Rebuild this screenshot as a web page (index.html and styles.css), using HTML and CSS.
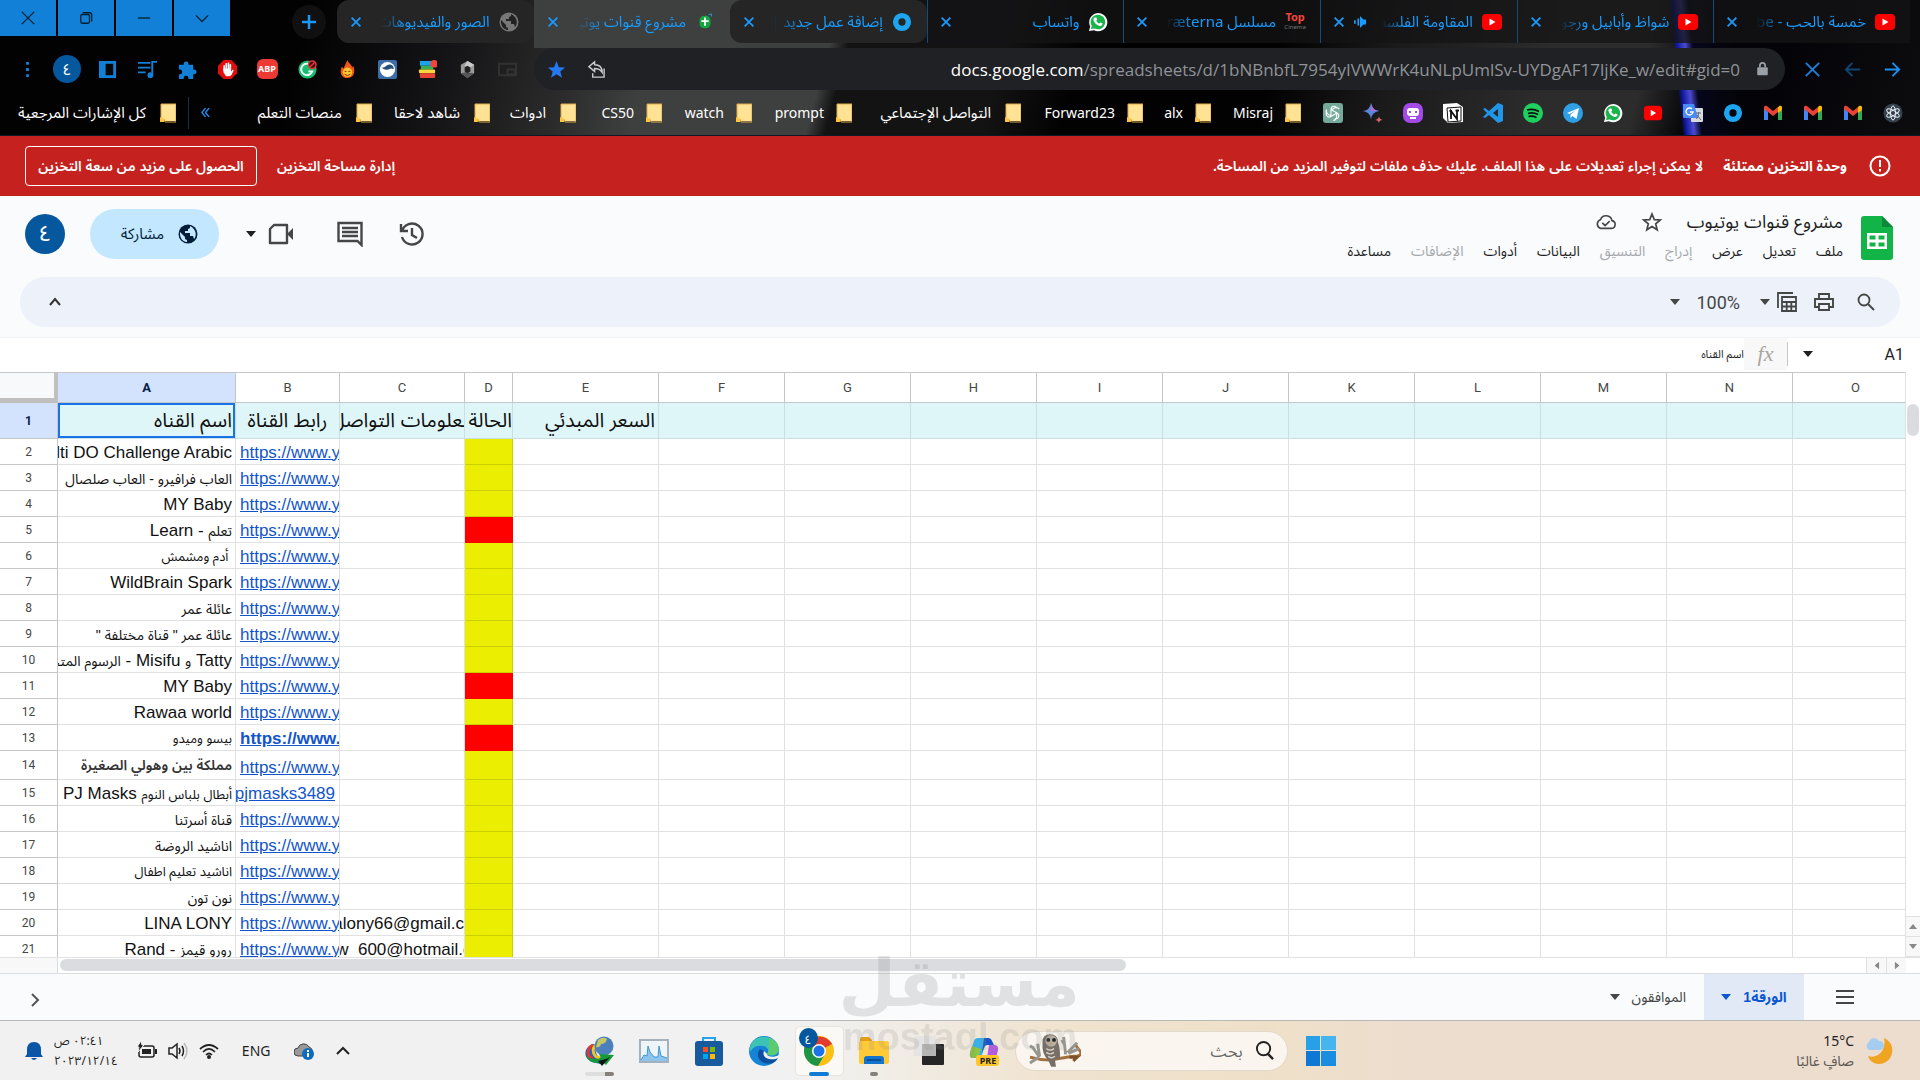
FILE: index.html
```html
<!DOCTYPE html>
<html lang="ar" dir="rtl">
<head>
<meta charset="utf-8">
<title>مشروع قنوات يوتيوب</title>
<link rel="stylesheet" href="styles.css">
</head>
<body>
<svg class="sprite" aria-hidden="true">
  <symbol id="x" viewBox="0 0 16 16"><path d="M3 3l10 10M13 3L3 13" fill="none" stroke="currentColor" stroke-width="2"/></symbol>
  <symbol id="caret" viewBox="0 0 10 6"><path d="M0 0h10L5 6z" fill="currentColor"/></symbol>
  <symbol id="yt" viewBox="0 0 22 16"><rect x="1" width="20" height="16" rx="4" fill="#f00"/><path d="M8.500 4.500v7l6-3.500z" fill="#fff"/></symbol>
  <symbol id="wa" viewBox="0 0 22 22"><path d="M1 21l1.500-5A10 10 0 1 1 6.500 20z" fill="#fff"/><path d="M3.200 18.800l1-3.400a8 8 0 1 1 3 2.700z" fill="#1bb34c"/><path d="M7.500 6l1.700 0 .9 2.300-1 1.200c.8 1.600 1.900 2.500 3.400 3.200l1.200-1.200 2.300 1.100c0 2-1.500 2.900-3 2.700-3.600-.6-6.800-4-7-7 0-1 .6-1.900 1.500-2.300z" fill="#fff"/></symbol>
  <symbol id="ring" viewBox="0 0 22 22"><circle cx="11" cy="11" r="7" fill="none" stroke="#1da5f0" stroke-width="6"/></symbol>
  <symbol id="folder" viewBox="0 0 16 20"><path d="M1 1h15v17H1z" fill="#ffe293"/><path d="M1 1h15v18H5l-1-3-2 1-1-3z" fill="none" stroke="#dfa94a"/><path d="M0 19v-5l4 2v3z" fill="#ffc43d"/></symbol>
  <symbol id="gmail" viewBox="0 0 20 16"><path d="M1 2v13h4V7z" fill="#4285f4"/><path d="M19 2v13h-4V7z" fill="#34a853"/><path d="M1 2c1-2 3-1 4 0l5 4 5-4v5l-5 4-5-4-4-3z" fill="#ea4335"/><path d="M15 2c1-1 3-2 4 0v3l-4 3z" fill="#fbbc04"/></symbol>
  <symbol id="globe" viewBox="0 0 20 20"><circle cx="10" cy="10" r="9.500" fill="currentColor"/><path d="M2 8l5 5v2l2 1v2C4 17.500 1.500 13 2 8zM12 2v2l-2 1v2H7v2h5v3h3l1 3c3-3 2.500-10-4-13z" fill="var(--hole)"/></symbol>
</svg>

<div class="browser">
  <div class="strip">
    <div class="tab"><svg class="fav"><use href="#yt"/></svg><span>خمسة بالحب - YouTube</span><button aria-label="إغلاق"><svg><use href="#x"/></svg></button></div>
    <div class="tab"><svg class="fav"><use href="#yt"/></svg><span>شواظ وأبابيل ورجوم</span><button aria-label="إغلاق"><svg><use href="#x"/></svg></button></div>
    <div class="tab"><svg class="fav"><use href="#yt"/></svg><span>المقاومة الفلسطينية</span><svg class="audio" viewBox="0 0 14 14"><path d="M14 4h-3L7 0v14l4-4h3zM4 3h2v8H4zM0 5h2v4H0z" fill="#189cff"/></svg><button aria-label="إغلاق"><svg><use href="#x"/></svg></button></div>
    <div class="tab"><span class="fav top"><b>Top</b><i>Cinema</i></span><span>مسلسل Barbaræterna</span><button aria-label="إغلاق"><svg><use href="#x"/></svg></button></div>
    <div class="tab"><svg class="fav"><use href="#wa"/></svg><span>واتساب</span><button aria-label="إغلاق"><svg><use href="#x"/></svg></button></div>
    <div class="tab lit"><svg class="fav"><use href="#ring"/></svg><span>إضافة عمل جديد | مستقل</span><button aria-label="إغلاق"><svg><use href="#x"/></svg></button></div>
    <div class="tab active"><svg class="fav" viewBox="0 0 22 22"><rect x="5" y="4" width="12" height="14" rx="5" fill="#12a542"/><path d="M11 6v9M7 10h8" stroke="#fff" stroke-width="2"/><path d="M15 3l3-1v3" stroke="#1da5f0" fill="none"/></svg><span>مشروع قنوات يوتيوب - جداول</span><button aria-label="إغلاق"><svg><use href="#x"/></svg></button></div>
    <div class="tab lit"><svg class="fav grey"><use href="#globe"/></svg><span>الصور والفيديوهات</span><button aria-label="إغلاق"><svg><use href="#x"/></svg></button></div>
    <button class="newtab" aria-label="علامة تبويب جديدة"><svg viewBox="0 0 16 16"><path d="M8 1v14M1 8h14" stroke="#1e96f5" stroke-width="2.500"/></svg></button>
    <div class="wincontrols">
      <button aria-label="بحث في علامات التبويب"><svg viewBox="0 0 16 16"><path d="M1 5l7 7 7-7"/></svg></button>
      <button aria-label="تصغير"><svg viewBox="0 0 16 16"><path d="M1 8h14"/></svg></button>
      <button aria-label="استعادة"><svg viewBox="0 0 16 16"><rect x="2" y="4" width="10" height="10" rx="2"/><path d="M4 2h8q2.500 0 2.500 2.500V12"/></svg></button>
      <button aria-label="إغلاق النافذة"><svg viewBox="0 0 16 16"><path d="M1 1l14 14M15 1L1 15"/></svg></button>
    </div>
  </div>

  <div class="navbar">
    <button class="nb" aria-label="رجوع"><svg viewBox="0 0 20 20"><path d="M2 10h15M10 3l7 7-7 7" fill="none" stroke="#1a90ef" stroke-width="2"/></svg></button>
    <button class="nb dim" aria-label="تقدم"><svg viewBox="0 0 20 20"><path d="M18 10H3M10 3l-7 7 7 7" fill="none" stroke="#1a90ef" stroke-width="2"/></svg></button>
    <button class="nb" aria-label="إيقاف"><svg viewBox="0 0 20 20"><path d="M3 3l14 14M17 3L3 17" fill="none" stroke="#1a80d8" stroke-width="2"/></svg></button>
    <div class="omni">
      <svg class="lock" viewBox="0 0 12 16"><path d="M3 6V4a3 3 0 0 1 6 0v2" fill="none" stroke="#9aa0a6" stroke-width="2"/><rect y="6" width="12" height="9" rx="1" fill="#9aa0a6"/></svg>
      <span class="url" dir="ltr"><b>docs.google.com</b>/spreadsheets/d/1bNBnbfL7954yIVWWrK4uNLpUmlSv-UYDgAF17ljKe_w/edit#gid=0</span>
      <button class="nb" aria-label="مشاركة"><svg viewBox="0 0 20 20"><path d="M8 2L2 7l6 5V9c4 0 6 1 8 4 0-5-3-8-8-8zM6 14v4h12V9" fill="none" stroke="#c7cacd" stroke-width="1.500"/></svg></button>
      <button class="nb" aria-label="إشارة مرجعية"><svg viewBox="0 0 20 20"><path d="M10 1l2.500 6.500 6.500.300-5 4.200 1.800 6.600L10 15l-5.800 3.600L6 12 1 7.800l6.500-.300z" fill="#2478f0"/></svg></button>
    </div>
    <button class="nb faint" aria-label="صورة داخل صورة"><svg viewBox="0 0 20 20"><path d="M1 4h18v12H1zM10 10h8v5h-8z" fill="none" stroke="#444" stroke-width="2"/></svg></button>
    <button class="nb" aria-label="إضافة"><svg viewBox="0 0 20 20"><path d="M10 1l7 4v9l-7 5-7-5V5z" fill="#9a9a9a"/><path d="M10 1l7 4-4 3-6-2z" fill="#c9c9c9"/><path d="M3 14l5-1 9 1-7 5z" fill="#555"/><path d="M10 6l3 2v4l-3 2-3-2V8z" fill="#222"/></svg></button>
    <button class="nb" aria-label="إضافة"><svg viewBox="0 0 20 20"><rect x="2" y="1" width="13" height="5" fill="#1ea0ea"/><rect x="3" y="6" width="13" height="4" fill="#35b057"/><rect x="1" y="10" width="17" height="4" rx="1" fill="#ffd53d"/><rect x="2" y="14" width="16" height="5" rx="1" fill="#ea4335"/><circle cx="17" cy="4" r="4" fill="#f2453c"/></svg></button>
    <button class="nb" aria-label="إضافة"><svg viewBox="0 0 20 20"><rect width="20" height="20" rx="2" fill="#3b6ea8"/><circle cx="10" cy="10" r="8" fill="#fff"/><path d="M3.500 8c5 1 6-6 12-2q1.500 2 1 4c-4-4-6 4-13-2z" fill="#264f7e"/></svg></button>
    <button class="nb" aria-label="إضافة"><svg viewBox="0 0 20 20"><path d="M10 0c1 4 4 4 5 8l1-2c3 7 0 13-6 13S1 14 4 7l2 2c1-3 2-5 4-9z" fill="#f2541b"/><circle cx="10" cy="13" r="5" fill="#ffc52e"/><path d="M7 12h2M11 12h2M7 15q3 3 6 0" stroke="#7a2600" fill="none"/></svg></button>
    <button class="nb" aria-label="إضافة"><svg viewBox="0 0 20 20"><circle cx="10" cy="10" r="9.500" fill="#18bd74"/><path d="M14 6a6 6 0 1 0 1 6h-4" stroke="#fff" stroke-width="2" fill="none"/><circle cx="15" cy="5" r="4" fill="#3a1112" stroke="#e33" stroke-width="1.500"/><path d="M12 8l6-6" stroke="#e33" stroke-width="1.500"/></svg></button>
    <button class="nb" aria-label="ABP"><span class="abp">ABP</span></button>
    <button class="nb" aria-label="إضافة"><svg viewBox="0 0 20 20"><path d="M6 0h8l6 6v8l-6 6H6l-6-6V6z" fill="#e40d0d"/><path d="M6.500 11V6M8.700 9V4M11 9V3.500M13 10V5" stroke="#fff" stroke-width="1.700" stroke-linecap="round"/><path d="M5.700 9h8v3l2-2 .800 1-2.500 5-2 1H8.500l-2.800-4z" fill="#fff"/></svg></button>
    <button class="nb" aria-label="الإضافات"><svg viewBox="0 0 20 20"><path d="M1 5h5V4a2.500 2.500 0 0 1 5 0v1h5v5h1a2.500 2.500 0 0 1 0 5h-1v5h-5v-1a2.500 2.500 0 0 0-5 0v1H1v-5h1a2.500 2.500 0 0 0 0-5H1z" fill="#1180d6"/></svg></button>
    <button class="nb" aria-label="الوسائط"><svg viewBox="0 0 20 20"><path d="M0 3h13M0 8h13M0 13h8M15 16V2h5" stroke="#1180d6" stroke-width="2" fill="none"/><circle cx="13" cy="16" r="3" fill="#1180d6"/></svg></button>
    <button class="nb" aria-label="اللوحة الجانبية"><svg viewBox="0 0 20 20"><rect x="1" y="1" width="18" height="18" fill="#1180d6"/><rect x="8" y="4" width="8" height="12" fill="#08080a"/></svg></button>
    <button class="nb" aria-label="الملف الشخصي"><span class="me small">٤</span></button>
    <button class="nb" aria-label="المزيد"><svg viewBox="0 0 20 20"><path d="M8.500 2h3v3h-3zM8.500 8.500h3v3h-3zM8.500 15h3v3h-3z" fill="#1180d6"/></svg></button>
  </div>

  <nav class="bookmarks">
    <a href="#" aria-label="React"><svg viewBox="0 0 20 20"><circle cx="10" cy="10" r="9.500" fill="#35424e"/><g fill="none" stroke="#e6edf2"><ellipse cx="10" cy="10" rx="2.500" ry="7"/><ellipse cx="10" cy="10" rx="2.500" ry="7" transform="rotate(60 10 10)"/><ellipse cx="10" cy="10" rx="2.500" ry="7" transform="rotate(120 10 10)"/></g></svg></a>
    <a href="#" aria-label="Gmail"><svg><use href="#gmail"/></svg></a>
    <a href="#" aria-label="Gmail"><svg><use href="#gmail"/></svg></a>
    <a href="#" aria-label="Gmail"><svg><use href="#gmail"/></svg></a>
    <a href="#" aria-label="مستقل"><svg><use href="#ring"/></svg></a>
    <a href="#" aria-label="ترجمة"><svg viewBox="0 0 20 20"><rect x="8" y="5" width="12" height="14" rx="1" fill="#d8dadd"/><path d="M0 1h11l4 14H1q-1 0-1-1z" fill="#4a8cf5"/><path d="M9 6a3.500 3.500 0 1 0 1 3H7" fill="none" stroke="#fff" stroke-width="1.300"/><path d="M13 10h5M15.500 9v1q0 4-2 6M14 12l4 5" stroke="#667" fill="none"/></svg></a>
    <a href="#" aria-label="YouTube"><svg><use href="#yt"/></svg></a>
    <a href="#" aria-label="WhatsApp"><svg><use href="#wa"/></svg></a>
    <a href="#" aria-label="Telegram"><svg viewBox="0 0 20 20"><circle cx="10" cy="10" r="10" fill="#2f9fe6"/><path d="M4 10l12-5-2.500 11-4-3-2 2v-3.500l5-4-6 3.500z" fill="#fff"/></svg></a>
    <a href="#" aria-label="Spotify"><svg viewBox="0 0 20 20"><circle cx="10" cy="10" r="10" fill="#1ed15e"/><path d="M4 7q6-2 12 1.500M5 10.500q5-1.500 10 1M5.500 13.500q4-1 8 1" stroke="#111" stroke-width="1.700" fill="none"/></svg></a>
    <a href="#" aria-label="VS Code"><svg viewBox="0 0 20 20"><path d="M15 0l5 2v16l-5 2-9-8-4 3-2-1 4-4-4-4 2-1 4 3zM15 6l-5 4 5 4z" fill="#2196e8" fill-rule="evenodd"/></svg></a>
    <a href="#" aria-label="Notion"><svg viewBox="0 0 20 20"><path d="M0 1l14-1 6 4v15l-15 1-5-5z" fill="#fff"/><path d="M4 5l14-1v14L5 19z" fill="#fff" stroke="#111"/><path d="M8 16V8l6 8V7M6.500 8H9M12.500 7.500H16" stroke="#111" stroke-width="1.800" fill="none"/></svg></a>
    <a href="#" aria-label="Poe"><svg viewBox="0 0 20 20"><rect width="20" height="20" rx="7" fill="#a34ae8"/><rect x="4" y="5" width="12" height="8" rx="3" fill="#fff"/><path d="M7 8v2M13 8v2" stroke="#a34ae8" stroke-width="2"/><path d="M7 15h6" stroke="#fff" stroke-width="2"/></svg></a>
    <a href="#" aria-label="Bard"><svg viewBox="0 0 20 20"><path d="M8 0q1 7 8 8-7 1-8 8-1-7-8-8 7-1 8-8z" fill="#5a85dd"/><path d="M8 0q1 7 8 8H8z" fill="#b36bd0"/><path d="M16 13q0 3 4 4-4 0-4 3-1-3-4-3 4-1 4-4z" fill="#d96570"/></svg></a>
    <a href="#" aria-label="ChatGPT"><svg viewBox="0 0 20 20"><rect width="20" height="20" rx="3" fill="#74a99b"/><g fill="none" stroke="#fff" stroke-width="1.100"><path d="M8 12.500V6.500q0-3 2.800-3.300 2.700 0 3.400 2.300M8 7l4-2.200q3-1 4.200 1.500"/><path d="M8 12.500V6.500q0-3 2.800-3.300 2.700 0 3.400 2.300M8 7l4-2.200q3-1 4.200 1.500" transform="rotate(120 10 10)"/><path d="M8 12.500V6.500q0-3 2.800-3.300 2.700 0 3.400 2.300M8 7l4-2.200q3-1 4.200 1.500" transform="rotate(240 10 10)"/></g></svg></a>
    <a href="#" class="f w90"><svg><use href="#folder"/></svg><span>Misraj</span></a>
    <a href="#" class="f w68"><svg><use href="#folder"/></svg><span>alx</span></a>
    <a href="#" class="f w122"><svg><use href="#folder"/></svg><span>Forward23</span></a>
    <a href="#" class="f ara w169"><svg><use href="#folder"/></svg><span>التواصل الإجتماعي</span></a>
    <a href="#" class="f w100"><svg><use href="#folder"/></svg><span>prompt</span></a>
    <a href="#" class="f w90"><svg><use href="#folder"/></svg><span>watch</span></a>
    <a href="#" class="f w86"><svg><use href="#folder"/></svg><span>CS50</span></a>
    <a href="#" class="f ara w86"><svg><use href="#folder"/></svg><span>ادوات</span></a>
    <a href="#" class="f ara w118"><svg><use href="#folder"/></svg><span>شاهد لاحقا</span></a>
    <a href="#" class="f ara"><svg><use href="#folder"/></svg><span>منصات التعلم</span></a>
    <span class="all"><button class="more" aria-label="المزيد من الإشارات"><svg viewBox="0 0 10 10"><path d="M5 0L1 5l4 5M9 0L5 5l4 5" fill="none" stroke="#1a90ef" stroke-width="1.500"/></svg></button><a href="#" class="f ara"><svg><use href="#folder"/></svg><span>كل الإشارات المرجعية</span></a></span>
  </nav>
</div>

<div class="banner">
  <svg viewBox="0 0 22 22"><circle cx="11" cy="11" r="9.500" fill="none" stroke="#fff" stroke-width="2"/><path d="M11 5v7M11 14v2.500" stroke="#fff" stroke-width="2"/></svg>
  <strong>وحدة التخزين ممتلئة</strong>
  <span>لا يمكن إجراء تعديلات على هذا الملف. عليك حذف ملفات لتوفير المزيد من المساحة.</span>
  <a href="#">إدارة مساحة التخزين</a>
  <button>الحصول على مزيد من سعة التخزين</button>
</div>

<header class="head">
  <svg class="logo" viewBox="0 0 32 44"><path d="M3 0h18l11 11v30q0 3-3 3H3q-3 0-3-3V3q0-3 3-3z" fill="#12b347"/><path d="M21 0l11 11H21z" fill="#0b8a3c"/><path d="M6 17h20v16H6zM8.500 19.500v4h6v-4zM17.500 19.500v4h6v-4zM8.500 26.500v4h6v-4zM17.500 26.500v4h6v-4z" fill="#fff" fill-rule="evenodd"/></svg>
  <div class="titles">
    <div class="name"><h1>مشروع قنوات يوتيوب</h1>
      <button aria-label="تمييز بنجمة"><svg viewBox="0 0 20 20"><path d="M10 2l2.300 5.600 6 .400-4.600 3.900 1.500 5.900-5.200-3.300-5.200 3.300 1.500-5.900L1.700 8l6-.400z" fill="none" stroke="#444746" stroke-width="1.700"/></svg></button>
      <button aria-label="حالة المستند"><svg viewBox="0 0 24 18"><path d="M6 16a5 5 0 0 1 0-9.500A6.500 6.500 0 0 1 18.500 7.500 4.300 4.300 0 0 1 18 16zM8 10l3 3 5-5" fill="none" stroke="#444746" stroke-width="1.800"/></svg></button>
    </div>
    <nav class="menu"><button>ملف</button><button>تعديل</button><button>عرض</button><button disabled>إدراج</button><button disabled>التنسيق</button><button>البيانات</button><button>أدوات</button><button disabled>الإضافات</button><button>مساعدة</button></nav>
  </div>
  <div class="actions">
    <button aria-label="السجل"><svg viewBox="0 0 26 26"><path d="M3 10A10.500 10.500 0 1 1 3 16M2 3v7h7M13 7v7l5 3" fill="none" stroke="#444746" stroke-width="2.400"/></svg></button>
    <button aria-label="التعليقات"><svg viewBox="0 0 26 26"><path d="M1.500 2h23v22l-4-4h-19zM5 7h16M5 11h16M5 15h16" fill="none" stroke="#444746" stroke-width="2.400"/></svg></button>
    <button class="meet" aria-label="مكالمة"><svg viewBox="0 0 26 26"><path d="M6 4h13v18H2V8z" fill="none" stroke="#444746" stroke-width="2.400" stroke-linejoin="round"/><path d="M20 12l5-5v12l-5-5z" fill="#444746"/></svg><svg class="caret"><use href="#caret"/></svg></button>
    <button class="share"><svg><use href="#globe"/></svg><span>مشاركة</span></button>
    <button aria-label="الحساب"><span class="me">٤</span></button>
  </div>
</header>

<div class="tools">
  <button aria-label="بحث"><svg viewBox="0 0 20 20"><circle cx="8" cy="8" r="5.500" fill="none" stroke="#444746" stroke-width="1.800"/><path d="M12 12l6 6" stroke="#444746" stroke-width="2"/></svg></button>
  <button aria-label="طباعة"><svg viewBox="0 0 20 20"><path d="M5 7V2h10v5M5 15H1V7h18v8h-4M5 12h10v6H5z" fill="none" stroke="#444746" stroke-width="1.900"/></svg></button>
  <button class="calc" aria-label="عرض الفلاتر"><svg viewBox="0 0 22 22"><path d="M2 17V2h15M6 6h14v14H6zM6 11h14M6 15.500h14M10.700 11v9M15.300 11v9" fill="none" stroke="#444746" stroke-width="1.800"/></svg><svg class="caret"><use href="#caret"/></svg></button>
  <button class="zoom"><span dir="ltr">100%</span><svg class="caret"><use href="#caret"/></svg></button>
  <button class="fold" aria-label="إخفاء القوائم"><svg viewBox="0 0 14 14"><path d="M2 10l5-6 5 6" fill="none" stroke="#333" stroke-width="2"/></svg></button>
</div>

<div class="formula">
  <button class="cellname"><span>A1</span><svg class="caret"><use href="#caret"/></svg></button>
  <span class="fx">fx</span>
  <input aria-label="شريط الصيغة" value="اسم القناه">
</div>

<main class="sheet" dir="ltr">
  <div class="grid">
  <table>
    <colgroup><col class="cn"><col class="ca"><col class="cb"><col class="cc"><col class="cd"><col class="ce"><col class="cf" span="10"></colgroup>
    <thead><tr><th class="corner"><th class="sel">A<th>B<th>C<th>D<th>E<th>F<th>G<th>H<th>I<th>J<th>K<th>L<th>M<th>N<th>O</tr></thead>
    <tbody>
    <tr class="first"><th class="sel">1<td class="pick"><div dir="rtl">اسم القناه</div><td><div class="mid" dir="rtl">رابط القناة</div><td><div class="mid" dir="rtl"><span>معلومات التواصل</span></div><td><div class="flush" dir="rtl">الحالة</div><td><div dir="rtl">السعر المبدئي</div><td><td><td><td><td> <td><td><td><td><td></tr>
    <tr><th>2<td><div dir="rtl">Multi DO Challenge Arabic</div><td><a href="#">https://www.youtube.com/</a><td><td class="y"><td> <td><td><td><td><td> <td><td><td><td><td></tr>
    <tr><th>3<td><div dir="rtl" class="ar">العاب فرافيرو - العاب صلصال</div><td><a href="#">https://www.youtube.com/</a><td><td class="y"><td> <td><td><td><td><td> <td><td><td><td><td></tr>
    <tr><th>4<td><div dir="rtl">MY Baby</div><td><a href="#">https://www.youtube.com/</a><td><td class="y"><td> <td><td><td><td><td> <td><td><td><td><td></tr>
    <tr><th>5<td><div dir="rtl"><span class="ar">تعلم</span> - Learn</div><td><a href="#">https://www.youtube.com/</a><td><td class="r"><td> <td><td><td><td><td> <td><td><td><td><td></tr>
    <tr><th>6<td><div dir="rtl" class="ar sm">&nbsp;أدم ومشمش</div><td><a href="#">https://www.youtube.com/</a><td><td class="y"><td> <td><td><td><td><td> <td><td><td><td><td></tr>
    <tr><th>7<td><div dir="rtl">WildBrain Spark</div><td><a href="#">https://www.youtube.com/</a><td><td class="y"><td> <td><td><td><td><td> <td><td><td><td><td></tr>
    <tr><th>8<td><div dir="rtl" class="ar">عائلة عمر</div><td><a href="#">https://www.youtube.com/</a><td><td class="y"><td> <td><td><td><td><td> <td><td><td><td><td></tr>
    <tr><th>9<td><div dir="rtl" class="ar">عائلة عمر " قناة مختلفة "</div><td><a href="#">https://www.youtube.com/</a><td><td class="y"><td> <td><td><td><td><td> <td><td><td><td><td></tr>
    <tr><th>10<td><div dir="rtl">Tatty <span class="ar">و</span> Misifu - <span class="ar">الرسوم المتحركة</span></div><td><a href="#">https://www.youtube.com/</a><td><td class="y"><td> <td><td><td><td><td> <td><td><td><td><td></tr>
    <tr><th>11<td><div dir="rtl">MY Baby</div><td><a href="#">https://www.youtube.com/</a><td><td class="r"><td> <td><td><td><td><td> <td><td><td><td><td></tr>
    <tr><th>12<td><div dir="rtl">Rawaa world</div><td><a href="#">https://www.youtube.com/</a><td><td class="y"><td> <td><td><td><td><td> <td><td><td><td><td></tr>
    <tr><th>13<td><div dir="rtl" class="ar sm">بيسو وميدو</div><td><a href="#" class="bold">https://www.youtube.com/</a><td><td class="r"><td> <td><td><td><td><td> <td><td><td><td><td></tr>
    <tr class="tall"><th>14<td><div dir="rtl" class="ar semi">مملكة بين وهولي الصغيرة</div><td><a href="#">https://www.youtube.com/</a><td><td class="y"><td> <td><td><td><td><td> <td><td><td><td><td></tr>
    <tr><th>15<td><div dir="rtl"><span class="ar sm">أبطال بلباس النوم</span> PJ Masks</div><td><a href="#" class="end">youtube.com/@pjmasks3489</a><td><td class="y"><td> <td><td><td><td><td> <td><td><td><td><td></tr>
    <tr><th>16<td><div dir="rtl" class="ar">قناة أسرتنا</div><td><a href="#">https://www.youtube.com/</a><td><td class="y"><td> <td><td><td><td><td> <td><td><td><td><td></tr>
    <tr><th>17<td><div dir="rtl" class="ar">اناشيد الروضة</div><td><a href="#">https://www.youtube.com/</a><td><td class="y"><td> <td><td><td><td><td> <td><td><td><td><td></tr>
    <tr><th>18<td><div dir="rtl" class="ar sm">اناشيد تعليم اطفال</div><td><a href="#">https://www.youtube.com/</a><td><td class="y"><td> <td><td><td><td><td> <td><td><td><td><td></tr>
    <tr><th>19<td><div dir="rtl" class="ar">نون تون</div><td><a href="#">https://www.youtube.com/</a><td><td class="y"><td> <td><td><td><td><td> <td><td><td><td><td></tr>
    <tr><th>20<td><div dir="rtl">LINA LONY</div><td><a href="#">https://www.youtube.com/</a><td><div class="mid"><span>linalony66@gmail.com</span></div><td class="y"><td> <td><td><td><td><td> <td><td><td><td><td></tr>
    <tr><th>21<td><div dir="rtl"><span class="ar">رورو قيمز</span> - Rand</div><td><a href="#">https://www.youtube.com/</a><td><div class="mid"><span>raww_600@hotmail.com</span></div><td class="y"><td> <td><td><td><td><td> <td><td><td><td><td></tr>
    </tbody>
  </table>
  </div>
  <div class="vbar"><div class="vthumb"></div><div class="vbtns"><button aria-label="أعلى"><svg class="up"><use href="#caret"/></svg></button><button aria-label="أسفل"><svg><use href="#caret"/></svg></button></div></div>
  <div class="hbar"><div class="htrack"><div class="hthumb"></div></div><button aria-label="يسار"><svg class="lt"><use href="#caret"/></svg></button><button aria-label="يمين"><svg class="rt"><use href="#caret"/></svg></button></div>
</main>

<div class="tabsbar">
  <button class="ham" aria-label="كل الأوراق"><svg viewBox="0 0 18 14"><path d="M0 1h18M0 7h18M0 13h18" stroke="#444746" stroke-width="2"/></svg></button>
  <button class="st on"><span>الورقة1</span><svg class="caret"><use href="#caret"/></svg></button>
  <button class="st"><span>الموافقون</span><svg class="caret"><use href="#caret"/></svg></button>
  <button class="next" aria-label="إظهار اللوحة"><svg viewBox="0 0 10 14"><path d="M2 1l6 6-6 6" fill="none" stroke="#555" stroke-width="2"/></svg></button>
  <div class="mark" aria-hidden="true"><b>مستقل</b><i>mostaql.com</i></div>
</div>

<footer class="taskbar">
  <div class="weather">
    <svg viewBox="0 0 30 30"><path d="M20 2c14 6 9 26-5 26-6 0-10-4-11-8 8 3 19-4 16-18z" fill="#f0a423"/><path d="M5 14a4.500 4.500 0 0 1 0-8A5.500 5.500 0 0 1 15 5a4.500 4.500 0 0 1 1 9z" fill="#a5cdf2"/></svg>
    <div><div dir="ltr">15°C</div><div class="sub">صافٍ غالبًا</div></div>
  </div>
  <div class="apps">
    <button class="win" aria-label="ابدأ"><svg viewBox="0 0 30 30"><path d="M0 0h14v14H0z" fill="#27a0e8"/><path d="M15 0h15v14H15z" fill="#46b5ef"/><path d="M0 15h14v15H0z" fill="#0f78d4"/><path d="M15 15h15v15H15z" fill="#1a8de0"/></svg></button>
    <label class="search"><svg viewBox="0 0 20 20"><circle cx="9" cy="8" r="7" fill="none" stroke="#222" stroke-width="2"/><path d="M13 13l6 6" stroke="#222" stroke-width="2.500"/></svg><input placeholder="بحث" aria-label="بحث">
      <svg class="owl" viewBox="0 0 54 36"><path d="M1 25q10 3 21 3 16-3 25-4 7 0 7-4l-6-8" stroke="#a1703c" stroke-width="3" fill="none"/><path d="M42 25l8 0-4 4" stroke="#7d5226" stroke-width="3" fill="none"/><path d="M11 25L4 15l-3-2M10 25L1 31M11 24L9 11M38 22L36 4M40 20L50 10M41 21l11-5M37 12l-3-5" stroke="#96968f" stroke-width="3" fill="none"/><path d="M14 9q0-8 8-8t8 8q3 9 2 17l-5 2 1 7h-5l-3-7q-7-6-6-19z" fill="#776f66"/><circle cx="23" cy="8" r="6" fill="#b8b0a5"/><circle cx="20" cy="7" r="2" fill="#222"/><circle cx="26" cy="7" r="2" fill="#222"/><path d="M22 9h2l-1 3z" fill="#e0a040"/><path d="M18 16q4 3 8 0M18 20q4 3 8 0M20 24q3 3 7 0" stroke="#d9d2c8" stroke-width="1.500" fill="none"/></svg></label>
    <button aria-label="Copilot"><svg viewBox="0 0 30 30"><path d="M9 2h9l-5 17q-1 3-4 3H4Q0 22 1 17L5 5q1-3 4-3z" fill="#37b1e8"/><path d="M3 10l9 3-3 9H4Q0 22 1 17z" fill="#8cc540"/><path d="M15 2h4q3 0 4 3l2 4h-7q-2 0-3 3l-2 5z" fill="#1757c8"/><path d="M20 9h6q4 1 3 5l-2 8h-9z" fill="#b45be0"/><rect x="7" y="19" width="23" height="11" rx="3" fill="#ffc629"/></svg><span class="pre">PRE</span></button>
    <button aria-label="تطبيق"><svg viewBox="0 0 30 30"><rect x="8" y="8" width="22" height="21" rx="1" fill="#262626"/><rect width="22" height="20" fill="#e4e4e4"/><path d="M8 8h14v12H8z" fill="#b5b5b5"/></svg></button>
    <button class="run" aria-label="الملفات"><svg viewBox="0 0 30 30"><path d="M1 3q0-2 2-2h7l3 3v4H1z" fill="#e59f13"/><rect y="5" width="30" height="23" rx="2" fill="#ffca37"/><path d="M5 28v-5q0-3 3-3h14q3 0 3 3v5z" fill="#1474cc"/><path d="M8 24h14" stroke="#0b4f98" stroke-width="2"/></svg></button>
    <button class="cur" aria-label="Chrome"><svg viewBox="0 0 30 30"><circle cx="15" cy="15" r="15" fill="#fbbf16"/><path d="M15 15L2 8A15 15 0 0 1 28 8z" fill="#e33b2e"/><path d="M15 15L2 7.500A15 15 0 0 0 14 30l7-12z" fill="#1e9447"/><circle cx="15" cy="15" r="7" fill="#fff"/><circle cx="15" cy="15" r="5.500" fill="#1b73e8"/></svg><span class="me tiny">٤</span></button>
    <button aria-label="Edge"><svg viewBox="0 0 30 30"><circle cx="15" cy="15" r="15" fill="#1583d8"/><path d="M1 11C4-3 28-3 30 13c0 7-9 8-12 5 3-4 0-8-5-8-5-1-9 1-12 6z" fill="#3cc3b5"/><path d="M20 2c8 2 11 9 9 14-3 4-8 4-11 2 3-4 2-8 2-16z" fill="#5acb6f"/><path d="M11 13c-6 8 2 17 13 14 2-1 4-3 5-5-5 3-17 1-14-7z" fill="#0c4f9e"/><path d="M15 15c-3 8 9 10 14 7l1-3c-5 3-12 2-12-1z" fill="#f2f1f0"/></svg></button>
    <button aria-label="المتجر"><svg viewBox="0 0 30 30"><path d="M9 6V2h12v4" fill="none" stroke="#26a3ee" stroke-width="2"/><rect x="1" y="5" width="28" height="25" rx="3" fill="#175a9e"/><path d="M9 11h5v5H9z" fill="#f25022"/><path d="M16 11h5v5h-5z" fill="#7fba00"/><path d="M9 18h5v5H9z" fill="#00a4ef"/><path d="M16 18h5v5h-5z" fill="#ffb900"/></svg></button>
    <button aria-label="الأداء"><svg viewBox="0 0 30 24"><rect x="1" y="1" width="28" height="22" fill="#eef4f8" stroke="#a4b2bd" stroke-width="2"/><path d="M2 21l3-5 3 1 1-10 2 6 4 5h4l1-11 2 10 6 2v3H2z" fill="#8cc4ee"/><path d="M2 21l3-5 3 1 1-10 2 6 4 5h4l1-11 2 10 6 2" fill="none" stroke="#3c98dd"/></svg></button>
    <button class="many" aria-label="IDM"><svg viewBox="0 0 30 30"><path d="M10 8C0 10-2 22 8 26l8 2 10-7c-12 3-16-2-14-13z" fill="#1c64c8"/><path d="M9 9C3 12 2 20 9 23" stroke="#e8352a" stroke-width="3" fill="none"/><path d="M12 9c-5 4-3 12 4 13" stroke="#f6c31c" stroke-width="3" fill="none"/><circle cx="20" cy="10" r="9.500" fill="#4c80bd"/><path d="M14 4q5-4 9-1-1 5-6 5-1 4-5 3z" fill="#c6c862"/><path d="M1 18q5 7 16 4l-2-4 15 1-8 10-3-3Q6 30 1 18z" fill="#179a3a"/><path d="M14 25l8-2 4-2-8 9z" fill="#111"/></svg></button>
  </div>
  <div class="tray">
    <svg class="s18" viewBox="0 0 14 14"><path d="M1 10l6-6 6 6" fill="none" stroke="#222" stroke-width="2"/></svg>
    <svg class="s20" viewBox="0 0 20 20"><path d="M4 15a4 4 0 0 1 0-8 6 6 0 0 1 11-1 4 4 0 0 1 3 5l-7 4z" fill="#999" stroke="#444"/><circle cx="14" cy="13" r="6" fill="#0f6cbd"/><path d="M14 9v2M14 12v4" stroke="#fff" stroke-width="2"/></svg>
    <span class="lang">ENG</span>
    <svg class="s20" viewBox="0 0 20 20"><g fill="none" stroke="#222" stroke-width="1.700"><path d="M1 8q9-8 18 0M4 11q6-6 12 0M7 14q3-3 6 0"/></g><circle cx="10" cy="16" r="2" fill="#222"/></svg>
    <svg class="s20" viewBox="0 0 20 20"><g fill="none" stroke="#222" stroke-width="1.500"><path d="M1 7h3l5-4v14l-5-4H1zM11 7q2 3 0 6M14 5q3 5 0 10"/><path d="M16 2q6 8 0 16" stroke="#bbb"/></g></svg>
    <svg class="s20" viewBox="0 0 20 20"><rect x="2" y="5" width="15" height="11" rx="2" fill="none" stroke="#222" stroke-width="1.500"/><path d="M5 8h9v5H5zM18 8h2v5h-2z" fill="#222"/><path d="M4 0L0 6h2l-1 5 6-7H5z" fill="#222" stroke="#f1f0ef"/></svg>
    <div class="clock"><div>٠٢:٤١ ص</div><div>٢٠٢٣/١٢/١٤</div></div>
    <svg class="s20" viewBox="0 0 20 20"><path d="M10 1q7 0 7 8v4l2 3H1l2-3V9q0-8 7-8zM7 17h6q-3 4-6 0z" fill="#0b55a8"/></svg>
  </div>
</footer>
</body>
</html>
```
FILE: styles.css
```css
* { box-sizing: border-box; }
body { margin: 0; min-height: 100vh; display: flex; flex-direction: column; font-family: "Liberation Sans", "Noto Sans Arabic", "DejaVu Sans", sans-serif; font-size: 14px; color: #1f1f1f; background: #f9fbfd; overflow: hidden; }
button, input { font: inherit; color: inherit; border: 0; padding: 0; margin: 0; background: none; }
button { display: flex; align-items: center; justify-content: center; }
a { color: inherit; text-decoration: none; }
svg { display: block; flex: none; }
.sprite { position: absolute; width: 0; height: 0; }
.caret { width: 10px; height: 6px; }

/* browser chrome */
.browser { font-family: "Noto Sans", "Noto Sans Arabic", "DejaVu Sans", sans-serif; color: #fff; border-bottom: 1px solid #101828;
  background: linear-gradient(84deg, transparent 87%, #1018a0 87.2%, #4a4ad0 87.6%, #06061c 88%, transparent 90%), linear-gradient(105deg, #020203 0 16%, #151517 24%, #2b2b2b 30%, #3e3f3f 34% 43%, #131314 44% 52%, #020203 56% 66%, #1a1a1b 72%, #2c2c2c 80% 85%, #040408 88% 92%, #0d0d10); }
.strip { display: flex; height: 48px; align-items: flex-start; padding-right: 10px; }
.tab { flex: 0 1 197px; min-width: 0; height: 43px; display: flex; align-items: center; padding: 0 14px 0 11px; color: #189cff; background: #141415c0; border-left: 1px solid #164a78; gap: 8px; white-space: nowrap; font-size: 15px; }
.tab > span:not(.fav) { flex: 1; overflow: hidden; -webkit-mask-image: linear-gradient(to left, #000 70%, transparent 92%); mask-image: linear-gradient(to left, #000 70%, transparent 92%); }
.tab .fav { width: 22px; height: 20px; flex: none; }
.tab button, .tab button svg { width: 14px; height: 14px; }
.tab.lit { background: #252526; border-color: transparent; border-radius: 12px; }
.tab.active { background: #3e3f3f; border-color: transparent; height: 48px; padding-bottom: 5px; }
.audio { width: 12px; height: 12px; }
.grey { color: #777; --hole: #222; }
.top { font-size: 11px; line-height: 10px; color: #f0443a; text-align: center; }
.top b, .top i { display: block; }
.top i { font-size: 6px; font-style: normal; color: #777; }
.newtab { width: 34px; height: 34px; margin: 5px 11px 0 auto; border-radius: 17px; background: #101011; }
.newtab svg { width: 16px; height: 16px; }
.wincontrols { display: flex; gap: 2px; margin-right: 62px; }
.wincontrols button { width: 56px; height: 36px; background: #1180d6; }
.wincontrols svg { width: 14px; height: 14px; fill: none; stroke: #06202f; stroke-width: 1.5; }
.navbar { display: flex; align-items: center; height: 42px; padding: 0 8px 0 7px; }
.nb { width: 40px; height: 40px; flex: none; }
.nb svg { width: 19px; height: 19px; }
.dim { opacity: .45; }
.faint { opacity: .5; }
.omni { flex: 1; display: flex; align-items: center; height: 42px; margin: 0 7px; padding: 0 17px 0 2px; background: #202124; border-radius: 21px; min-width: 0; }
.lock { width: 11px; height: 14px; margin-left: 17px; }
.url { flex: 1; text-align: right; white-space: nowrap; overflow: hidden; font-size: 17px; color: #8f9398; font-family: "Open Sans", "Noto Sans", sans-serif; }
.url b { font-weight: 400; color: #fff; }
.abp { background: #ed3a34; font-size: 9px; font-weight: 700; line-height: 20px; width: 21px; border-radius: 6px; color: #fff; }
.me { display: grid; place-items: center; width: 40px; height: 40px; border-radius: 50%; background: #05579e; color: #fff; font-size: 22px; line-height: 24px; }
.me.small { width: 28px; height: 28px; font-size: 16px; }
.bookmarks { display: flex; align-items: center; height: 45px; padding: 0 7px 0 18px; font-size: 14px; white-space: nowrap; }
.bookmarks > a:not(.f) { width: 40px; display: flex; justify-content: center; }
.bookmarks svg { width: 20px; height: 20px; }
.bookmarks .f { display: flex; align-items: center; gap: 12px; padding-right: 12px; }
.bookmarks .f.ara { font-size: 15px; gap: 14px; }
.bookmarks .f svg { width: 16px; height: 20px; }
.w68 { width: 68px; } .w86 { width: 86px; } .w90 { width: 90px; } .w100 { width: 100px; } .w118 { width: 118px; } .w122 { width: 122px; } .w169 { width: 169px; }
.all { display: flex; margin-right: auto; }
.bookmarks .more { width: 34px; border-left: 1px solid #16304c; }
.bookmarks .more svg { width: 9px; height: 9px; }

/* storage banner */
.banner { display: flex; align-items: center; gap: 20px; height: 60px; padding: 0 29px 0 25px; background: #c5221f; color: #fff; font-size: 14px; font-weight: 600; white-space: nowrap; }
.banner svg { width: 22px; height: 22px; margin-left: 2px; }
.banner strong { font-weight: 700; }
.banner span { flex: 1; font-weight: 600; }
.banner button { height: 40px; width: 232px; border: 1px solid #fff; border-radius: 4px; font-weight: 600; }

/* document header */
.head { display: flex; height: 81px; padding: 0 27px 0 25px; }
.logo { width: 32px; height: 44px; margin-top: 20px; }
.titles { flex: 1; margin-right: 18px; }
.name { display: flex; align-items: center; gap: 24px; height: 34px; margin-top: 9px; }
h1 { margin: 0; font-size: 18px; font-weight: 400; }
.name svg { width: 22px; height: 20px; }
.menu { display: flex; gap: 20px; height: 24px; color: #1f1f1f; }
.menu button:disabled { color: #a5a8ab; }
.actions { display: flex; align-items: center; gap: 36px; height: 75px; }
.actions svg { width: 26px; height: 26px; }
.actions .caret { width: 10px; height: 6px; }
.meet { gap: 12px; margin: 0 7px 0 -9px; }
.share { width: 129px; height: 50px; gap: 14px; padding-left: 10px; border-radius: 25px; background: #c2e7ff; color: #001d35; --hole: #c2e7ff; margin-left: -11px; font-size: 15px; }
.actions .share svg { width: 20px; height: 20px; }
.tools { display: flex; align-items: center; height: 50px; margin: 0 20px; padding: 0 24px 0 28px; border-radius: 25px; background: #ecf1fa; color: #444746; }
.tools svg { width: 20px; height: 20px; }
.tools button { margin-left: 22px; gap: 10px; }
.tools button:nth-child(2) { margin-left: 16px; }
.tools .calc { gap: 6px; margin-left: 20px; }
.tools .calc svg { width: 22px; height: 22px; }
.tools .caret, .tools .calc .caret { width: 10px; height: 6px; }
.zoom { font: 18px Roboto, sans-serif; }
.zoom .caret { margin-right: 6px; }
.tools .fold { margin: 0 auto 0 0; }
.tools .fold svg { width: 14px; height: 14px; }

/* formula bar */
.formula { display: flex; align-items: center; height: 35px; margin-top: 10px; padding: 0 16px 2px 0; background: #fff; border-top: 1px solid #f1f3f4; }
.cellname { width: 117px; height: 24px; justify-content: space-between; padding-left: 15px; border-left: 1px solid #c7c7c7; font-family: Roboto, sans-serif; font-size: 16px; }
.fx { width: 43px; height: 32px; display: grid; place-items: center; background: #f8f8f8; color: #aaa59f; font: italic 22px "Liberation Serif", serif; }
.formula input { flex: 1; font-size: 11px; height: 24px; }

/* grid */
.sheet { flex: 1; display: grid; grid-template-columns: minmax(0, 1fr) 15px; grid-template-rows: 1fr 16px; height: 601px; background: #fff; min-height: 0; }
.grid { overflow: hidden; min-height: 0; height: 585px; }
table { width: 1918px; table-layout: fixed; border-collapse: separate; border-spacing: 0; font-size: 17px; color: #111; }
.cn { width: 58px; } .ca { width: 178px; } .cb { width: 104px; } .cc { width: 125px; } .cd { width: 48px; } .ce { width: 146px; } .cf { width: 126px; }
th, td { height: 26px; padding: 0; border: 0 solid #e1e1e1; border-width: 0 1px 1px 0; overflow: hidden; }
th { font: 12px Roboto, sans-serif; color: #444746; text-align: center; border-color: #c4c7c5; }
thead th { height: 31px; border-top-width: 1px; font-size: 13px; }
th.sel { background: #d3e3fd; color: #041e49; font-weight: 700; }
th.corner { background: #f8f9fa; border-right: 4px solid #c0c0c0; border-bottom: 5px solid #c0c0c0; }
.first td { height: 36px; background: #dff6f9; border-color: #c9dfe2; font-size: 20px; color: #111; }
.tall td { height: 29px; }
td div, td a { display: block; height: 22px; line-height: 24px; padding: 0 3px; white-space: nowrap; overflow: hidden; }
td .ar { font-size: 14px; }
td .ar.sm { font-size: 13px; }
td .mid { display: flex; justify-content: center; }
td .flush { padding: 0; }
.first td div { height: 32px; line-height: 30px; }
td a { color: #1155cc; text-decoration: underline; padding: 0 4px; }
td .end { display: flex; justify-content: flex-end; }
td .bold { font-weight: 700; }
td .semi { font-weight: 600; color: #333; }
.tall td a { height: 28px; line-height: 34px; }
.tall td div { height: 24px; }
td.y { background: #ebee00; border-color: #cdd000; }
td.r { background: #f00; border-color: #f00; }
td.pick { box-shadow: inset 0 0 0 2px #1a73e8; }
.vbar { display: flex; flex-direction: column; border-left: 1px solid #e1e1e1; border-bottom: 1px solid #e1e1e1; padding: 32px 1px 0; }
.vthumb { height: 32px; border-radius: 6px; background: #dadce0; }
.vbtns { margin: auto -1px 0; }
.vbtns button { width: 14px; height: 20px; background: #f8f8f8; border-top: 1px solid #e1e1e1; }
.vbar svg, .hbar svg { width: 8px; height: 5px; color: #888; }
.up { transform: rotate(180deg); } .lt { transform: rotate(90deg); } .rt { transform: rotate(-90deg); }
.hbar { grid-column: 1 / 3; display: flex; border-top: 1px solid #e1e1e1; background: linear-gradient(to right, #f8f8f8 57px, #dadce0 57px 58px, #fff 58px); padding: 0 14px 0 60px; }
.htrack { flex: 1; }
.hthumb { width: 59%; height: 12px; margin-top: 1px; border-radius: 6px; background: #dadce0; }
.hbar button { width: 20px; background: #f8f8f8; border-left: 1px solid #e1e1e1; }

/* sheet tabs */
.tabsbar { position: relative; display: flex; align-items: center; height: 48px; padding: 0 65px 0 30px; border-top: 1px solid #dadce0; border-bottom: 1px solid #b8b8b8; }
.ham svg { width: 20px; height: 14px; }
.ham { margin-left: 31px; }
.st { height: 46px; gap: 12px; padding: 0 18px; color: #444746; }
.st.on { width: 100px; background: #e1e9f7; color: #0b57d0; font-weight: 700; }
.next { margin-right: auto; padding-top: 6px; }
.next svg { width: 10px; height: 14px; }
.mark { position: absolute; left: 840px; top: -24px; width: 240px; text-align: center; color: #888; opacity: .22; pointer-events: none; z-index: 2; }
.mark b { display: block; font: 700 66px/68px "DejaVu Sans", sans-serif; }
.mark i { display: block; font: 700 38px/38px "Liberation Sans", sans-serif; opacity: .8; }

/* taskbar */
.taskbar { display: grid; grid-template-columns: 1fr auto 1fr; align-items: center; height: 59px; padding: 0 24px; background: linear-gradient(to right, #f1f1f1 42%, #f0e3cf 55%, #eee0c8 66%, #edddcf 74%); font-family: "Noto Sans", "Noto Sans Arabic", "DejaVu Sans", sans-serif; }
.weather { display: flex; align-items: center; gap: 10px; line-height: 20px; }
.weather svg { width: 30px; height: 30px; margin-right: 2px; }
.weather > div { text-align: right; }
.sub { color: #5c5752; }
.apps { display: flex; align-items: center; }
.apps button { position: relative; width: 55px; height: 50px; }
.apps button svg { width: 30px; height: 30px; }
.apps .win { width: 56px; }
.search { display: flex; align-items: center; width: 273px; height: 40px; margin: 0 5px 0 3px; padding: 0 13px; border-radius: 20px; background: #faf6ef; border: 1px solid #e4dacb; gap: 12px; }
.search > svg { width: 19px; height: 19px; }
.search input { flex: 1; min-width: 0; font-size: 16px; outline: 0; }
.search input::placeholder { color: #666; opacity: 1; }
.search .owl { width: 52px; height: 35px; }
.cur::before { content: ""; position: absolute; inset: 0 3px; background: #fbf9f6; border-radius: 5px; border: 1px solid #e8e3dc; }
.cur svg { position: relative; }
.me.tiny { position: absolute; left: 7px; top: 2px; width: 19px; height: 20px; font-size: 12px; }
.apps button::after { position: absolute; bottom: 0; height: 4px; border-radius: 2px; }
.cur::after { content: ""; width: 20px; background: #0f7bd6; }
.run::after { content: ""; width: 8px; background: #85807a; }
.many::after { content: ""; width: 29px; background: linear-gradient(to left, #85807a 9px, #dedede 9px); }
.pre { position: absolute; left: 20px; bottom: 10px; width: 23px; font: 700 9px/11px "Noto Sans", sans-serif; color: #222; }
.tray { display: flex; align-items: center; justify-content: flex-end; gap: 11px; font-size: 14px; }
.s18 { width: 14px; height: 14px; margin-left: 11px; }
.s20 { width: 20px; height: 20px; }
.lang { margin: 0 13px 0 12px; }
.clock { font-size: 12px; line-height: 20px; text-align: left; margin-left: -1px; margin-right: 8px; }
```
